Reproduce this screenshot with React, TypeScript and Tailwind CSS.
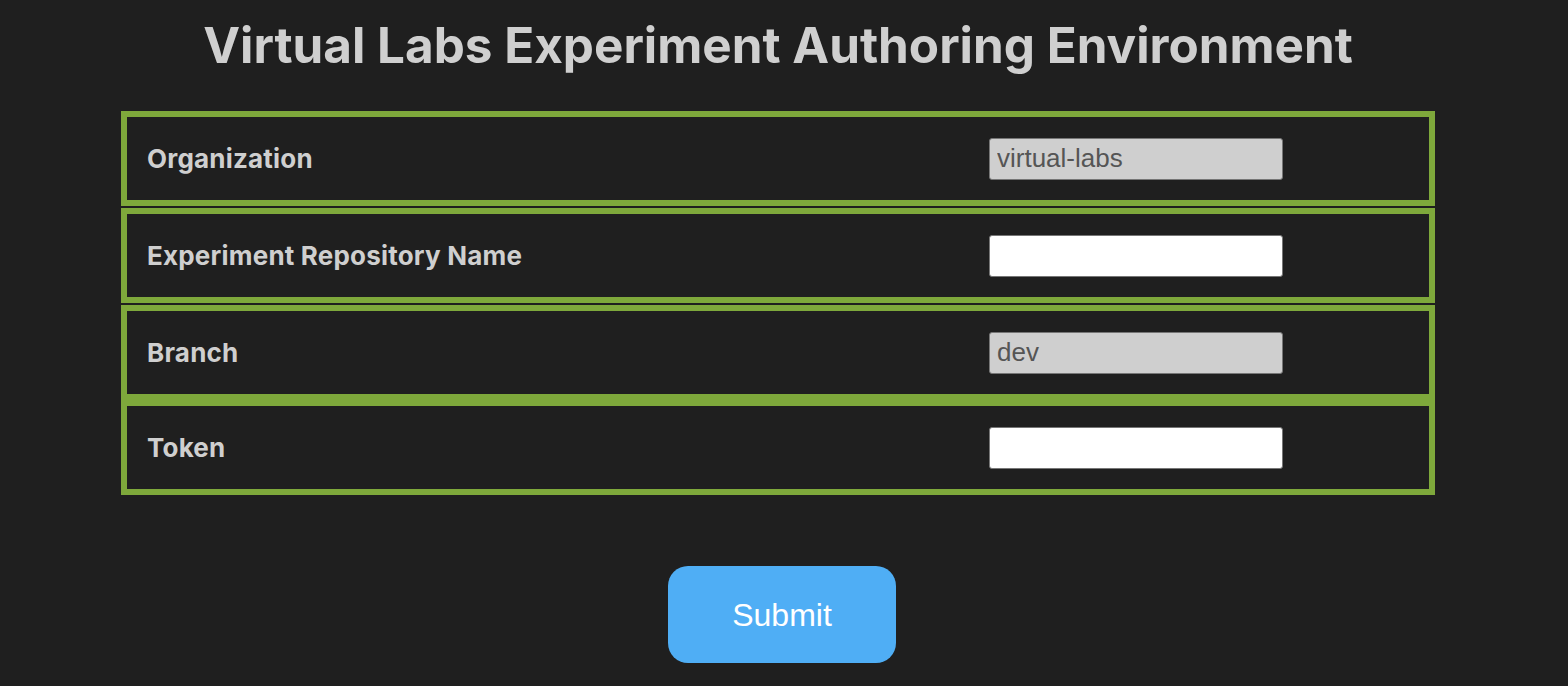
import React from "react";

const rows = [
  { label: "Organization", value: "virtual-labs", disabled: true, mt: "" },
  { label: "Experiment Repository Name", value: "", disabled: false, mt: "mt-[2px]" },
  { label: "Branch", value: "dev", disabled: true, mt: "mt-[2px]" },
  { label: "Token", value: "", disabled: false, mt: "" },
];

export default function App() {
  return (
    <div className="w-[1568px] h-[686px] overflow-hidden bg-[#1f1f1f] font-['Inter',sans-serif]">
      <div className="pl-[121px] pr-[133px]">
        <h1 className="text-center text-[49.4px] font-bold text-[#cfcfcf] leading-none pt-[21px] h-[111px] whitespace-nowrap">
          Virtual Labs Experiment Authoring Environment
        </h1>
        <div className="flex flex-col">
          {rows.map((r) => (
            <div
              key={r.label}
              className={`${r.mt} h-[95px] border-[6px] border-[#7ea83b] flex items-center justify-between pl-[20px] pr-[146px]`}
            >
              <span className="text-[26px] font-bold text-[#cfcfcf] tracking-[0.2px]">{r.label}</span>
              <input
                type="text"
                defaultValue={r.value}
                disabled={r.disabled}
                className={`w-[294px] h-[42px] rounded-[3px] border border-[#767676] px-[7px] text-[26px] font-['Liberation_Sans',sans-serif] outline-none ${
                  r.disabled ? "bg-[#cfcfcf] text-[#555555]" : "bg-white text-black"
                }`}
              />
            </div>
          ))}
        </div>
      </div>
      <div className="flex justify-center pr-[4px] mt-[71px]">
        <button className="w-[228px] h-[97px] rounded-[20px] bg-[#4faef5] text-white text-[32px] font-['Liberation_Sans',sans-serif]">
          Submit
        </button>
      </div>
    </div>
  );
}
